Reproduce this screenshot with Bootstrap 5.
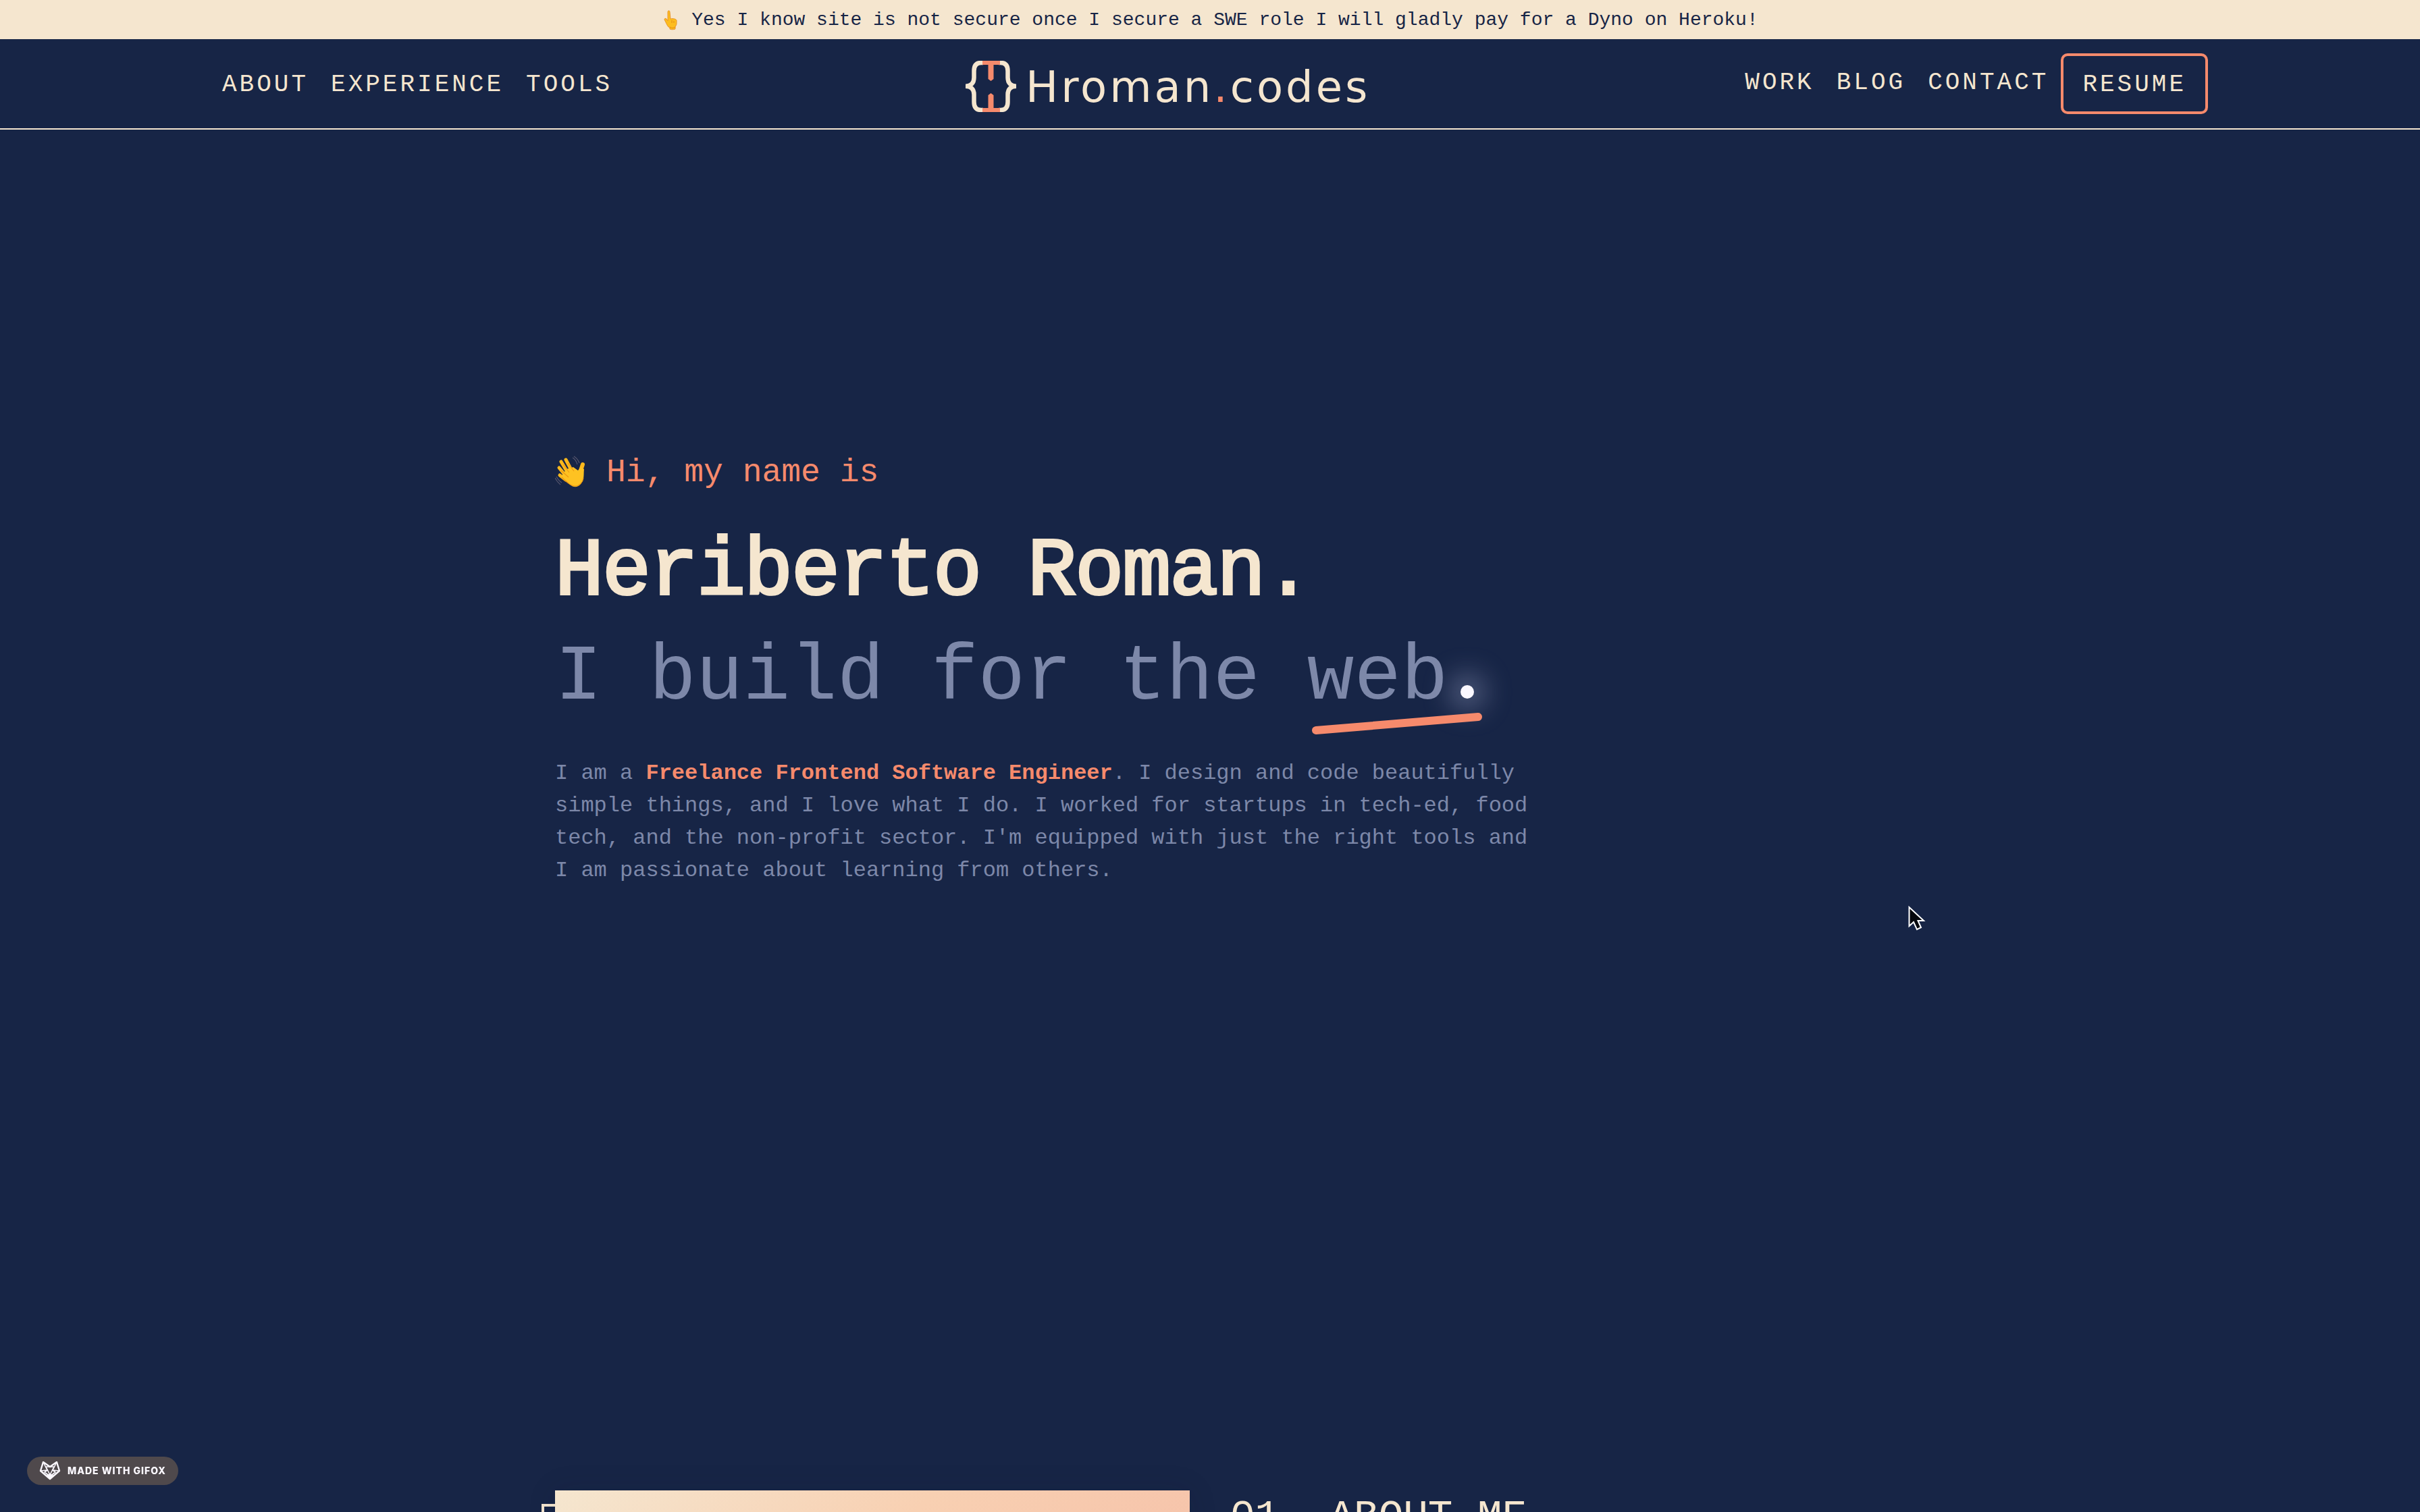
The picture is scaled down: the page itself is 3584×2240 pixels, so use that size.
<!DOCTYPE html>
<html lang="en">
<head>
<meta charset="utf-8">
<meta name="viewport" content="width=device-width, initial-scale=1">
<title>Hroman.codes</title>
<link href="https://cdn.jsdelivr.net/npm/bootstrap@5.3.0/dist/css/bootstrap.min.css" rel="stylesheet">
<style>
:root { --navy: #172546; --cream: #f5e6cf; --coral: #f68a6c; --slate: #7d88a9; }
body {
  background: var(--navy);
  color: var(--cream);
  font-family: "Liberation Mono", "DejaVu Sans Mono", monospace;
  height: 100vh;
  overflow: hidden;
}
.notice { background: var(--cream); color: var(--navy); font-size: 28px; line-height: 56px; padding-top: 2px; gap: 17px; }
.notice svg { width: 27px; height: 30px; }
.site-nav { height: 134px; padding: 0 314px 0 329px; border-bottom: 2px solid var(--cream); }
.menu-links { gap: 33px; padding-top: 4px; font-size: 36px; line-height: 48px; letter-spacing: 4px; }
.menu-links a { color: var(--cream); text-decoration: none; }
.right-group { gap: 18px; }
.right-group .menu-links { padding-bottom: 6px; }
.btn-resume {
  --bs-btn-color: var(--cream); --bs-btn-border-color: var(--coral);
  --bs-btn-hover-color: var(--navy); --bs-btn-hover-bg: var(--coral);
  border-width: 4px; border-radius: 10px; padding: 19px 28px 15px;
  font-family: inherit; font-size: 36px; line-height: 48px; letter-spacing: 4px;
}
.brand { gap: 14px; margin: 8px 32px 0 0; color: var(--cream); text-decoration: none; }
.brand svg { width: 75px; height: 76px; }
.brand-name { font-family: "DejaVu Sans", sans-serif; font-size: 64px; line-height: 76px; letter-spacing: 4px; padding-top: 2px; }
.coral { color: var(--coral); }
.page-width { width: 1450px; max-width: 100%; margin: 0 auto 0 822px; }
.hero { min-height: 90vh; padding-top: 470px; }
.greeting { font-size: 48px; line-height: 76px; color: var(--coral); gap: 28px; margin-bottom: 32px; }
.greeting svg { width: 48px; height: 50px; }
.hero-name { font-size: 120px; line-height: 156px; font-weight: 400; -webkit-text-stroke: 4px var(--cream); letter-spacing: -2px; margin: 0; }
.tagline { font-size: 116px; line-height: 156px; color: var(--slate); margin: 0 0 40px; white-space: nowrap; }
.dot { display: inline-block; width: 20px; height: 20px; border-radius: 50%; background: #fbf8ff; margin-left: 18px; box-shadow: 0 0 40px 16px rgba(190, 195, 230, .38); }
.swoosh { position: absolute; left: 4px; bottom: -20px; width: 256px; height: 36px; }
.intro { font-size: 32px; line-height: 48px; color: var(--slate); }
.about { gap: 60px; }
.portrait { width: 940px; height: 940px; background: linear-gradient(135deg, #f5e6cf, #f8d0b2 30%, #f6c3aa 55%); box-shadow: 0 0 40px rgba(10, 22, 50, .12); }
.portrait-frame { position: absolute; inset: 20px 20px -20px -20px; border: 4px solid var(--cream); }
.portrait-wrap { flex: none; }
.about-title { font-size: 61px; line-height: 72px; white-space: nowrap; font-weight: 400; padding-top: 4px; }
.made-with {
  position: fixed; left: 40px; bottom: 40px; height: 42px; padding: 0 18px; gap: 10px;
  background: #4f494c; color: #fbf8ff; border-radius: 21px; text-decoration: none;
  font: 800 14px/42px Inter, sans-serif; letter-spacing: 1px;
}
.made-with svg { width: 32px; height: 28px; }
.pointer { position: absolute; left: 2826px; top: 1341px; width: 26px; height: 38px; }
</style>
</head>
<body>
<div class="notice d-flex justify-content-center align-items-center">
  <svg viewBox="0 0 27 30" aria-hidden="true">
    <path d="M9 3c0-3 3-3 3 0l1 10c4-1 8 0 9 2v5c0 3-2 3-2 6v2c-3 1-6 1-8 0v-2c-3-1-4-4-6-8l-2-4c0-2 2-2 3-1l2 3Z" fill="#fdbd1e" stroke="#e8942a"/>
    <path d="M15 15v4m3-3v3M12 25c3 2 5 2 8 0" fill="none" stroke="#e38a12"/>
  </svg>
  <span>Yes I know site is not secure once I secure a SWE role I will gladly pay for a Dyno on Heroku!</span>
</div>

<nav class="site-nav d-flex justify-content-between align-items-center">
  <div class="menu-links d-flex">
    <a href="#about">ABOUT</a><a href="#experience">EXPERIENCE</a><a href="#tools">TOOLS</a>
  </div>
  <a class="brand d-flex align-items-center" href="#">
    <svg viewBox="0 0 75 76" fill="none" aria-hidden="true">
      <g stroke="#f5e6cf" stroke-width="6.5">
        <path d="M26 3h-3Q12.500 3 12.500 15V25C12.500 33 8 37.700 0 37.700C8 37.700 12.500 42 12.500 50V61Q12.500 73 23 73h3"/>
        <path d="M49 3h3Q62.500 3 62.500 15V25C62.500 33 67 37.700 75 37.700C67 37.700 62.500 42 62.500 50V61Q62.500 73 52 73h-3"/>
      </g>
      <path fill="#f68a6c" d="M25 0H51V6H41.500V27L37.500 30L33.500 27V6H25ZM25 76H51V70H41.500V51L37.500 48L33.500 51V70H25Z"/>
    </svg>
    <span class="brand-name">Hroman<span class="coral">.</span>codes</span>
  </a>
  <div class="right-group d-flex align-items-center">
    <div class="menu-links d-flex">
      <a href="#work">WORK</a><a href="#blog">BLOG</a><a href="#contact">CONTACT</a>
    </div>
    <button type="button" class="btn btn-resume">RESUME</button>
  </div>
</nav>

<main>
  <section class="hero">
    <div class="page-width">
      <p class="greeting d-flex align-items-center">
        <svg viewBox="0 0 48 50" aria-hidden="true">
          <g stroke="#fdb91c" stroke-linecap="round" fill="none">
            <path d="M18 24L9 9M24 21L16 6M16 30L6 18M16 36L7 29" stroke-width="5"/>
            <path d="M36 28L41 13" stroke-width="6"/>
          </g>
          <path d="M9 31L17 20L27 17L34 22L38 17L43 20C42 28 44 35 38 42C33 48 27 47 22 43Z" fill="#fec222"/>
          <path d="M12 13l9 12M19 11l9 12M9 22l11 10M10 32c7 7 13 13 20 13c6 0 11-5 12-12" fill="none" stroke="#ee9812" stroke-width="1.200"/>
          <path d="M26 3q5 3 7 10M28 1q6 4 8 10M2 31q3 6 8 9M0 33q3 6 8 10" fill="none" stroke="#54546b" stroke-width="1.200"/>
        </svg>
        <span>Hi, my name is</span>
      </p>
      <h1 class="hero-name">Heriberto Roman.</h1>
      <h2 class="tagline fw-normal">I build for the <span class="position-relative">web<span class="dot"></span><svg class="swoosh" viewBox="0 0 256 36" aria-hidden="true"><path d="M9 28L249 8" stroke="#f68a6c" stroke-width="12" stroke-linecap="round"/></svg></span></h2>
      <p class="intro">I am a <strong class="coral">Freelance Frontend Software Engineer</strong>. I design and code beautifully simple things, and I love what I do. I worked for startups in tech-ed, food tech, and the non-profit sector. I'm equipped with just the right tools and I am passionate about learning from others.</p>
    </div>
  </section>
  <section id="about" class="about page-width d-flex align-items-start">
    <div class="portrait-wrap position-relative">
      <div class="portrait-frame"></div>
      <div class="portrait position-relative"></div>
    </div>
    <h2 class="about-title">01. ABOUT ME</h2>
  </section>
</main>

<a class="made-with d-flex align-items-center" href="#gifox">
  <svg viewBox="0 0 32 28" fill="none" stroke="#fbf8ff" stroke-width="1.600" stroke-linejoin="round" aria-hidden="true">
    <path d="M6 1L16 8L26 1L30 14L16 26L2 14Z" stroke-width="2.400"/>
    <path d="M6 1L12 13L2 14M26 1L20 13L30 14M10 8H22L16 20ZM12 13L8 16L16 22L24 16L20 13"/>
    <path d="M12 21L16 19L20 21L16 26Z" fill="#fbf8ff"/>
  </svg>
  <span>MADE WITH GIFOX</span>
</a>

<svg class="pointer" viewBox="0 0 26 38" aria-hidden="true">
  <path d="M1.500 3V31L8 25L13 36L19 33L14.500 23H23Z" fill="#05070c" stroke="#fff" stroke-width="2"/>
</svg>
<script src="https://cdn.jsdelivr.net/npm/bootstrap@5.3.0/dist/js/bootstrap.bundle.min.js"></script>
</body>
</html>
